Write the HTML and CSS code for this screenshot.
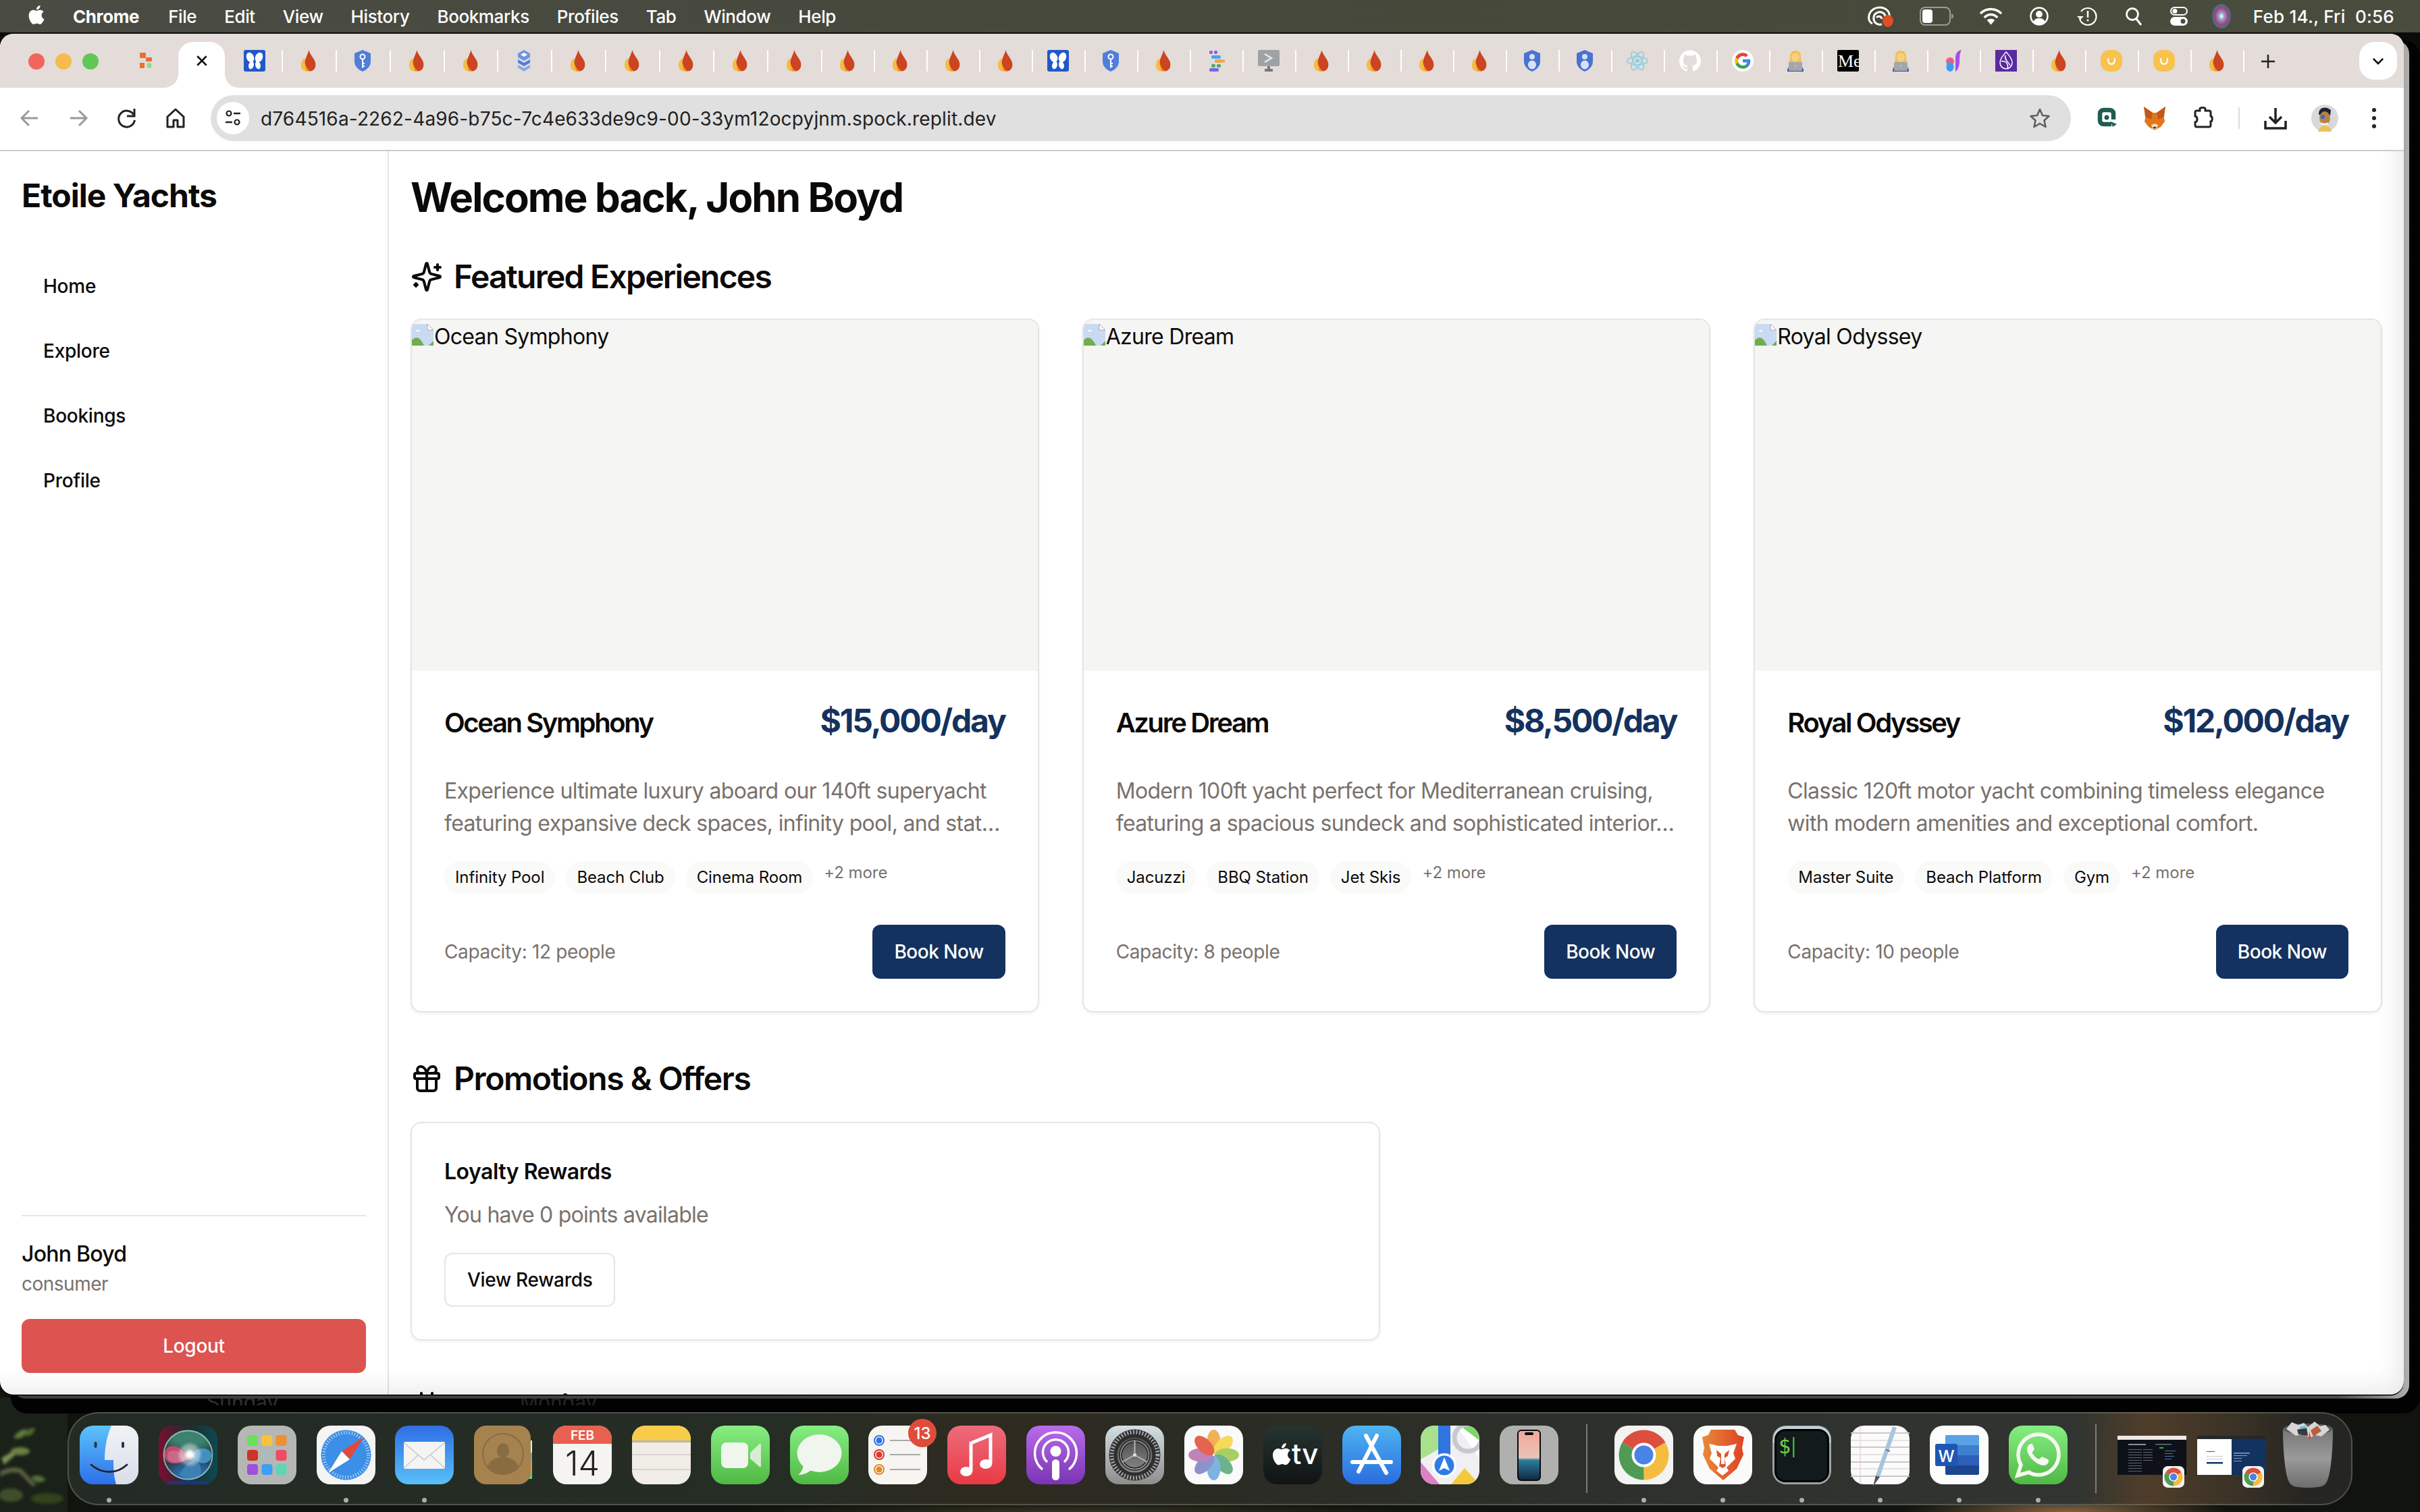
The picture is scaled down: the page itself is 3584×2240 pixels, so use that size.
FILE: index.html
```html
<!DOCTYPE html>
<html lang="en">
<head>
<meta charset="utf-8">
<title>Etoile Yachts</title>
<link rel="stylesheet" href="styles.css">
</head>
<body>
<svg class="defs" width="0" height="0" aria-hidden="true">
  <defs>
    <filter id="blur2"><feGaussianBlur stdDeviation="2"/></filter>
    <filter id="blur8"><feGaussianBlur stdDeviation="7"/></filter>
    <linearGradient id="gFinder" x1="0" y1="0" x2="0" y2="1"><stop offset="0" stop-color="#5bc3fa"/><stop offset="1" stop-color="#2d6fea"/></linearGradient>
    <linearGradient id="gFinderR" x1="0" y1="0" x2="0" y2="1"><stop offset="0" stop-color="#f1f2f5"/><stop offset="1" stop-color="#d8deea"/></linearGradient>
    <linearGradient id="gSiri" x1="0" y1="0" x2="1" y2="0"><stop offset="0" stop-color="#7a0f30"/><stop offset=".5" stop-color="#1f2a33"/><stop offset="1" stop-color="#0c4a4e"/></linearGradient>
    <linearGradient id="gMail" x1="0" y1="0" x2="0" y2="1"><stop offset="0" stop-color="#2f6ee6"/><stop offset="1" stop-color="#58c0f7"/></linearGradient>
    <linearGradient id="gFace" x1="0" y1="0" x2="0" y2="1"><stop offset="0" stop-color="#86ee82"/><stop offset="1" stop-color="#4fb944"/></linearGradient>
    <linearGradient id="gMusic" x1="0" y1="0" x2="0" y2="1"><stop offset="0" stop-color="#ee6c7c"/><stop offset="1" stop-color="#e93a44"/></linearGradient>
    <linearGradient id="gPod" x1="0" y1="0" x2="0" y2="1"><stop offset="0" stop-color="#b96bea"/><stop offset="1" stop-color="#7a34b4"/></linearGradient>
    <linearGradient id="gSet" x1="0" y1="0" x2="0" y2="1"><stop offset="0" stop-color="#d3dfe4"/><stop offset="1" stop-color="#8d8e8c"/></linearGradient>
    <linearGradient id="gGear" x1="0" y1="0" x2="0" y2="1"><stop offset="0" stop-color="#4a4a4c"/><stop offset="1" stop-color="#8b8b8c"/></linearGradient>
    <linearGradient id="gTv" x1="0" y1="0" x2="0" y2="1"><stop offset="0" stop-color="#263430"/><stop offset="1" stop-color="#101414"/></linearGradient>
    <linearGradient id="gApp" x1="0" y1="0" x2="0" y2="1"><stop offset="0" stop-color="#4fb4f0"/><stop offset="1" stop-color="#2a6cdf"/></linearGradient>
    <linearGradient id="gPhone" x1="0" y1="0" x2="0" y2="1"><stop offset="0" stop-color="#f3a79a"/><stop offset=".55" stop-color="#e8c3b8"/><stop offset=".6" stop-color="#2d7d9e"/><stop offset="1" stop-color="#0e2a44"/></linearGradient>
    <linearGradient id="gBrave" x1="0" y1="0" x2="1" y2="0"><stop offset="0" stop-color="#e98a3a"/><stop offset="1" stop-color="#dd4326"/></linearGradient>
    <linearGradient id="gTrash" x1="0" y1="0" x2="0" y2="1"><stop offset="0" stop-color="#777"/><stop offset=".5" stop-color="#9a9a9a"/><stop offset="1" stop-color="#6d6d6d"/></linearGradient>
    <symbol id="flame" viewBox="0 0 32 32">
      <path fill="#cc4420" d="M16.500 0C17.500 6 23 11 25.500 17 28 24 25 31 18.500 31.500 13 31.500 10 27 10 21 10 13 15 7 16.500 0Z"/>
      <path fill="#f5bd41" d="M10 12C6.500 15 4.500 19 5 24c.5 4.500 3.500 7.500 7.500 7.500 2.500 0 4.500-.2 6-.2C13.500 29 10 22 10 12Z"/>
      <path fill="#ee8b2c" d="M10 13C9.800 21 13.500 28.500 18.500 31.300c-2 .2-3.800.2-5 .2C11.500 26 9.500 19 10 13Z"/>
    </symbol>
    <symbol id="butterfly" viewBox="0 0 32 32">
      <rect width="32" height="32" rx="3" fill="#2058c9"/>
      <ellipse cx="9.500" cy="11" rx="5.500" ry="7.500" fill="#fff" transform="rotate(-22 9.500 11)"/>
      <ellipse cx="22.500" cy="11" rx="5.500" ry="7.500" fill="#fff" transform="rotate(22 22.500 11)"/>
      <ellipse cx="11" cy="22.500" rx="3.800" ry="6" fill="#fff" transform="rotate(14 11 22.500)"/>
      <ellipse cx="21" cy="22.500" rx="3.800" ry="6" fill="#fff" transform="rotate(-14 21 22.500)"/>
    </symbol>
    <symbol id="shieldkey" viewBox="0 0 32 32">
      <path fill="#4f7edb" d="M16 0l12 5v12c0 7-5 12-12 15C9 29 4 24 4 17V5Z"/>
      <circle cx="16" cy="10" r="3.500" fill="none" stroke="#fff" stroke-width="2"/>
      <path stroke="#fff" stroke-width="2" fill="none" d="M16 13.500v13M16 20h3M16 24h3"/>
    </symbol>
    <symbol id="shield" viewBox="0 0 32 32">
      <path fill="#4873d2" d="M16 0l12 5v12c0 7-5 12-12 15C9 29 4 24 4 17V5Z"/>
      <circle cx="16" cy="10" r="4" fill="#d9e2f5"/>
      <ellipse cx="16" cy="22" rx="6" ry="6.500" fill="#d9e2f5"/>
    </symbol>
    <symbol id="stack" viewBox="0 0 32 32">
      <path fill="#6d95e3" d="M16 0l9 5v6l-9 5-9-5V5Z"/>
      <path fill="#fff" d="M16 4l5 3-5 3-5-3Z"/>
      <path fill="#4f7edb" d="M7 14l9 5 9-5v5l-9 5-9-5Z"/>
      <path fill="#86a8ea" d="M7 22l9 5 9-5v4l-9 6-9-6Z"/>
    </symbol>
    <symbol id="dots" viewBox="0 0 32 32">
      <rect x="6" y="1" width="5" height="5" rx="2" fill="#7f63e2"/><rect x="13" y="1" width="5" height="5" rx="2" fill="#7f63e2"/>
      <rect x="9" y="8" width="14" height="5" rx="2" fill="#49a6e6"/>
      <rect x="14" y="14" width="12" height="5" rx="2" fill="#f1a452"/><rect x="26" y="14" width="3" height="5" rx="1.500" fill="#f1a452"/>
      <rect x="9" y="21" width="6" height="5" rx="2" fill="#3fb16f"/><rect x="17" y="21" width="6" height="5" rx="2" fill="#3fb16f"/>
      <rect x="6" y="27" width="14" height="5" rx="2" fill="#7f63e2"/>
    </symbol>
    <symbol id="term" viewBox="0 0 32 32">
      <rect width="32" height="24" rx="2" fill="#9ea2a6"/>
      <path d="M10 6l10 6-10 6" fill="none" stroke="#e8e8e8" stroke-width="2.500"/>
      <rect x="14" y="24" width="4" height="4" fill="#77797c"/><rect x="10" y="28" width="12" height="4" fill="#77797c"/>
    </symbol>
    <symbol id="react" viewBox="0 0 32 32">
      <g fill="none" stroke="#86cfe2" stroke-width="1.500"><ellipse cx="16" cy="16" rx="15" ry="6"/><ellipse cx="16" cy="16" rx="15" ry="6" transform="rotate(60 16 16)"/><ellipse cx="16" cy="16" rx="15" ry="6" transform="rotate(120 16 16)"/></g>
      <circle cx="16" cy="16" r="3" fill="#86cfe2"/>
    </symbol>
    <symbol id="github" viewBox="0 0 24 24">
      <path fill="#fff" d="M12 .297c-6.630 0-12 5.373-12 12 0 5.303 3.438 9.800 8.205 11.385.6.113.82-.258.82-.577 0-.285-.01-1.040-.015-2.040-3.338.724-4.042-1.610-4.042-1.610C4.422 18.070 3.633 17.700 3.633 17.700c-1.087-.744.084-.729.084-.729 1.205.084 1.838 1.236 1.838 1.236 1.070 1.835 2.809 1.305 3.495.998.108-.776.417-1.305.76-1.605-2.665-.3-5.466-1.332-5.466-5.930 0-1.310.465-2.380 1.235-3.220-.135-.303-.54-1.523.105-3.176 0 0 1.005-.322 3.300 1.230.96-.267 1.980-.399 3-.405 1.020.006 2.040.138 3 .405 2.280-1.552 3.285-1.230 3.285-1.230.645 1.653.24 2.873.12 3.176.765.84 1.230 1.910 1.230 3.220 0 4.610-2.805 5.625-5.475 5.920.42.36.81 1.096.81 2.220 0 1.606-.015 2.896-.015 3.286 0 .315.21.69.825.57C20.565 22.092 24 17.592 24 12.297c0-6.627-5.373-12-12-12"/>
    </symbol>
    <symbol id="google" viewBox="0 0 24 24">
      <circle cx="12" cy="12" r="12" fill="#fff"/>
      <g transform="translate(2.400 2.400) scale(.8)">
      <path fill="#4285f4" d="M22.560 12.250c0-.78-.07-1.530-.2-2.250H12v4.260h5.920c-.26 1.370-1.040 2.530-2.080 3.310v2.770h3.570c2.080-1.920 3.280-4.740 3.280-8.090z"/>
      <path fill="#34a853" d="M12 23c2.970 0 5.460-.98 7.280-2.660l-3.570-2.770c-.98.66-2.230 1.060-3.710 1.060-2.860 0-5.290-1.930-6.160-4.530H2.180v2.840C3.990 20.530 7.700 23 12 23z"/>
      <path fill="#fbbc05" d="M5.840 14.090c-.22-.66-.35-1.360-.35-2.090s.13-1.430.35-2.090V7.070H2.180C1.430 8.550 1 10.220 1 12s.43 3.450 1.180 4.930l2.850-2.220.81-.62z"/>
      <path fill="#ea4335" d="M12 5.380c1.620 0 3.060.56 4.210 1.640l3.150-3.150C17.450 2.090 14.970 1 12 1 7.700 1 3.990 3.470 2.180 7.070l3.660 2.840c.87-2.600 3.300-4.530 6.160-4.530z"/>
      </g>
    </symbol>
    <symbol id="woman" viewBox="0 0 32 32">
      <path fill="#f1c04f" d="M8 10C8 3 12 1 16 1s8 2 8 9c0 4 1 8 2 10H6c1-2 2-6 2-10Z"/>
      <ellipse cx="16" cy="11" rx="6" ry="6.500" fill="#f6cf84"/>
      <path fill="#2a52b8" d="M4 32c0-5 2-8 6-9h12c4 1 6 4 6 9Z"/>
      <rect x="6" y="18" width="20" height="13" rx="1" fill="#a4a6aa"/>
      <circle cx="16" cy="24" r="1" fill="#d8d8d8"/>
    </symbol>
    <symbol id="medium" viewBox="0 0 32 32">
      <rect width="32" height="32" rx="2" fill="#000"/>
      <text x="1" y="25" class="fav-me">Me</text>
    </symbol>
    <symbol id="jlogo" viewBox="0 0 32 32">
      <path fill="#a54ee8" d="M19 32c4-3 6-8 6-16 0-7 1-13 3-16-6 1-9 5-9 12Z"/>
      <circle cx="11" cy="17" r="6" fill="#ea5f7f"/>
      <ellipse cx="11" cy="25" rx="5.500" ry="7" fill="#3d9cf0"/>
    </symbol>
    <symbol id="sui" viewBox="0 0 32 32">
      <rect width="32" height="32" fill="#5a2aa0"/>
      <path d="M16 3c5 6 9 10 9 16a9 9 0 0 1-18 0c0-6 4-10 9-16Z" fill="none" stroke="#fff" stroke-width="1.500"/>
      <path d="M9 17c6-2 11 3 9 11M15 8c-2 6 4 9 7 15" fill="none" stroke="#fff" stroke-width="1.500"/>
    </symbol>
    <symbol id="ulogo" viewBox="0 0 32 32">
      <rect width="32" height="32" rx="13" fill="#f8c24e"/>
      <path d="M11 13c0 5 2 8 5 8s5-3 5-8" fill="none" stroke="#fff" stroke-width="2.200" stroke-linecap="round"/>
    </symbol>
    <symbol id="chrome" viewBox="0 0 87 87">
      <path fill="#dc4f3e" d="M43.500 43.500L11.500 25A37 37 0 0 1 75.500 25Z"/>
      <path fill="#f4bd3f" d="M43.500 43.500L75.500 25A37 37 0 0 1 43.500 80.500Z"/>
      <path fill="#4f9a55" d="M43.500 43.500L43.500 80.500A37 37 0 0 1 11.500 25Z"/>
      <circle cx="43.500" cy="43.500" r="18" fill="#fff"/>
      <circle cx="43.500" cy="43.500" r="14" fill="#4a82e6"/>
    </symbol>
  </defs>
</svg>

<div class="backdrop"></div>
<svg class="foliage" viewBox="0 0 100 170">
  <rect width="100" height="170" fill="#1a2118"/>
  <g filter="url(#blur2)">
    <path d="M2 90l24-14 -2 8-18 16Z" fill="#7f8f54"/>
    <path d="M20 60c6-10 14-14 20-12-2 10-10 16-20 12Z" fill="#5f7a3a"/>
    <path d="M36 56c4-8 10-12 16-10-2 8-8 14-16 10Z" fill="#4f6a30"/>
    <path d="M0 110c10-6 22-8 32-4l22 24-6 2-20-20c-10-2-18 0-28 6Z" fill="#5c5f40"/>
    <path d="M46 118c8-4 16-2 22 4-8 6-16 6-22-4Z" fill="#56703a"/>
    <ellipse cx="16" cy="145" rx="18" ry="10" fill="#3e5029"/>
    <ellipse cx="70" cy="150" rx="24" ry="8" fill="#33431f"/>
    <ellipse cx="30" cy="80" rx="14" ry="6" fill="#6c8042"/>
  </g>
</svg>
<div class="back-black"></div>
<div class="ghost-strip"><span class="ghost ghost-a">Sunday</span><span class="ghost ghost-b">Monday</span></div>
<div class="back-shell"></div>

<header class="menubar">
  <svg class="apple" viewBox="0 0 24 24"><path fill="#fff" d="M12.152 6.896c-.948 0-2.415-1.078-3.960-1.040-2.040.027-3.910 1.183-4.961 3.014-2.117 3.675-.546 9.103 1.519 12.090 1.013 1.454 2.208 3.090 3.792 3.039 1.520-.065 2.090-.987 3.935-.987 1.831 0 2.350.987 3.960.948 1.637-.026 2.676-1.480 3.676-2.948 1.156-1.688 1.636-3.325 1.662-3.415-.039-.013-3.182-1.221-3.220-4.857-.026-3.040 2.480-4.494 2.597-4.559-1.429-2.090-3.623-2.324-4.390-2.376-2-.156-3.675 1.090-4.610 1.090zM15.530 3.830c.843-1.012 1.400-2.427 1.245-3.830-1.207.052-2.662.805-3.532 1.818-.78.896-1.454 2.338-1.273 3.714 1.338.104 2.715-.688 3.559-1.701"/></svg>
  <nav class="menu">
    <span class="menu-app">Chrome</span><span>File</span><span>Edit</span><span>View</span><span>History</span><span>Bookmarks</span><span>Profiles</span><span>Tab</span><span>Window</span><span>Help</span>
  </nav>
  <div class="status">
    <svg class="st st-cc" viewBox="0 0 40 32"><g fill="none" stroke="#fff" stroke-width="3"><path d="M8 27C2 24 1 16 5 10c5-7 15-9 22-5 5 3 7 8 6 12"/><path d="M22 28C14 30 9 24 10 17c1-5 6-8 11-7 4 1 6 4 6 7"/><path d="M14 18c3-3 7-2 8 2"/></g><ellipse cx="31" cy="23" rx="8" ry="9" fill="#e04f22"/></svg>
    <svg class="st st-batt" viewBox="0 0 50 28"><rect x="1" y="1" width="44" height="26" rx="7" fill="none" stroke="#9b9b92" stroke-width="2"/><rect x="4" y="4" width="15" height="20" rx="4" fill="#fff"/><path d="M47 10c2 1 3 2 3 4s-1 3-3 4Z" fill="#9b9b92"/></svg>
    <svg class="st st-wifi" viewBox="0 0 36 28"><g fill="none" stroke="#fff" stroke-width="3.500"><path d="M2 10c9-9 23-9 32 0"/><path d="M8 16c6-6 14-6 20 0"/></g><path d="M12 20c4-3 8-3 12 0l-6 7Z" fill="#fff"/></svg>
    <svg class="st st-user" viewBox="0 0 28 28"><circle cx="14" cy="14" r="12.500" fill="none" stroke="#fff" stroke-width="2.500"/><circle cx="14" cy="11" r="5" fill="#fff"/><path d="M5 23c2-5 5-6 9-6s7 1 9 6c-5 4-13 4-18 0Z" fill="#fff"/></svg>
    <svg class="st st-tm" viewBox="0 0 32 28"><path d="M7 7a12.500 12.500 0 1 1-2 11" fill="none" stroke="#fff" stroke-width="2.200"/><path d="M1 14l5 5 5-5Z" fill="#fff"/><path d="M17 6v10" stroke="#fff" stroke-width="2.500"/><circle cx="17" cy="20" r="1.500" fill="#fff"/></svg>
    <svg class="st st-search" viewBox="0 0 26 28"><circle cx="11" cy="11" r="8.500" fill="none" stroke="#fff" stroke-width="2.800"/><path d="M17 18l7 9" stroke="#fff" stroke-width="3"/></svg>
    <svg class="st st-cc2" viewBox="0 0 26 28"><rect x="1" y="1" width="24" height="11" rx="5.500" fill="none" stroke="#fff" stroke-width="2"/><circle cx="7" cy="6.500" r="3.500" fill="#fff"/><rect y="15" width="26" height="13" rx="6.500" fill="#fff"/><circle cx="19" cy="21.500" r="3.500" fill="#48493f"/></svg>
    <svg class="st st-siri" viewBox="0 0 28 36"><defs><radialGradient id="gOrb"><stop offset="0" stop-color="#fff"/><stop offset=".3" stop-color="#8fa0c8"/><stop offset=".7" stop-color="#a83d7a"/><stop offset="1" stop-color="#2a8088"/></radialGradient></defs><ellipse cx="14" cy="18" rx="14" ry="18" fill="url(#gOrb)"/></svg>
    <span class="clock">Feb 14., Fri&nbsp;&nbsp;0:56</span>
  </div>
</header>

<main class="window">
  <div class="tabstrip">
    <div class="lights"><i class="light light-r"></i><i class="light light-y"></i><i class="light light-g"></i></div>
    <svg class="fav-replit" viewBox="0 0 20 24"><rect x="0" y="0" width="9" height="8" rx="1" fill="#ec6f2f"/><rect x="9" y="7" width="9" height="6" rx="1" fill="#ec6f2f"/><rect x="0" y="15" width="7" height="8" rx="1" fill="#ec6f2f"/><ellipse cx="14" cy="19" rx="3.500" ry="4" fill="#8fd88f"/></svg>
    <div class="tab-active"><svg class="tab-x" viewBox="0 0 16 16"><path d="M2 2l12 12M14 2L2 14" stroke="#111" stroke-width="2.200"/></svg></div>
    <div class="tabs">
      <div class="tab tab-wide"><svg class="fav"><use href="#butterfly"/></svg></div>
      <div class="tab tab-wide"><svg class="fav"><use href="#flame"/></svg></div>
      <div class="tab tab-wide"><svg class="fav"><use href="#shieldkey"/></svg></div>
      <div class="tab tab-wide"><svg class="fav"><use href="#flame"/></svg></div>
      <div class="tab tab-wide"><svg class="fav"><use href="#flame"/></svg></div>
      <div class="tab tab-wide"><svg class="fav"><use href="#stack"/></svg></div>
      <div class="tab tab-wide"><svg class="fav"><use href="#flame"/></svg></div>
      <div class="tab tab-wide"><svg class="fav"><use href="#flame"/></svg></div>
      <div class="tab tab-wide"><svg class="fav"><use href="#flame"/></svg></div>
      <div class="tab tab-wide"><svg class="fav"><use href="#flame"/></svg></div>
      <div class="tab tab-wide"><svg class="fav"><use href="#flame"/></svg></div>
      <div class="tab"><svg class="fav"><use href="#flame"/></svg></div>
      <div class="tab"><svg class="fav"><use href="#flame"/></svg></div>
      <div class="tab"><svg class="fav"><use href="#flame"/></svg></div>
      <div class="tab"><svg class="fav"><use href="#flame"/></svg></div>
      <div class="tab"><svg class="fav"><use href="#butterfly"/></svg></div>
      <div class="tab"><svg class="fav"><use href="#shieldkey"/></svg></div>
      <div class="tab"><svg class="fav"><use href="#flame"/></svg></div>
      <div class="tab"><svg class="fav"><use href="#dots"/></svg></div>
      <div class="tab"><svg class="fav"><use href="#term"/></svg></div>
      <div class="tab"><svg class="fav"><use href="#flame"/></svg></div>
      <div class="tab"><svg class="fav"><use href="#flame"/></svg></div>
      <div class="tab"><svg class="fav"><use href="#flame"/></svg></div>
      <div class="tab"><svg class="fav"><use href="#flame"/></svg></div>
      <div class="tab"><svg class="fav"><use href="#shield"/></svg></div>
      <div class="tab"><svg class="fav"><use href="#shield"/></svg></div>
      <div class="tab"><svg class="fav"><use href="#react"/></svg></div>
      <div class="tab"><svg class="fav"><use href="#github"/></svg></div>
      <div class="tab"><svg class="fav"><use href="#google"/></svg></div>
      <div class="tab"><svg class="fav"><use href="#woman"/></svg></div>
      <div class="tab"><svg class="fav"><use href="#medium"/></svg></div>
      <div class="tab"><svg class="fav"><use href="#woman"/></svg></div>
      <div class="tab"><svg class="fav"><use href="#jlogo"/></svg></div>
      <div class="tab"><svg class="fav"><use href="#sui"/></svg></div>
      <div class="tab"><svg class="fav"><use href="#flame"/></svg></div>
      <div class="tab"><svg class="fav"><use href="#ulogo"/></svg></div>
      <div class="tab"><svg class="fav"><use href="#ulogo"/></svg></div>
      <div class="tab"><svg class="fav"><use href="#flame"/></svg></div>
    </div>
    <svg class="tab-plus" viewBox="0 0 22 22"><path d="M11 1v20M1 11h20" stroke="#222" stroke-width="2.500"/></svg>
    <div class="tab-chevron"><svg viewBox="0 0 20 12"><path d="M2 2l8 8 8-8" fill="none" stroke="#111" stroke-width="3"/></svg></div>
  </div>

  <div class="toolbar">
    <svg class="tool" viewBox="0 0 36 36"><path d="M30 18H7M17 7L6 18l11 11" fill="none" stroke="#9a9a9a" stroke-width="3"/></svg>
    <svg class="tool" viewBox="0 0 36 36"><path d="M6 18h23M19 7l11 11-11 11" fill="none" stroke="#9a9a9a" stroke-width="3"/></svg>
    <svg class="tool" viewBox="0 0 36 36"><path d="M28 13a12 12 0 1 0 1.500 8" fill="none" stroke="#222" stroke-width="3"/><path d="M29 4v11H18" fill="none" stroke="#222" stroke-width="3"/></svg>
    <svg class="tool" viewBox="0 0 36 36"><path d="M6 16L18 5l12 11v15H21V21h-6v10H6Z" fill="none" stroke="#222" stroke-width="3" stroke-linejoin="round"/></svg>
    <div class="omnibox">
      <span class="chip"><svg viewBox="0 0 28 28"><circle cx="8" cy="7" r="3.500" fill="none" stroke="#222" stroke-width="2.200"/><path d="M15 7h10M3 20h10" stroke="#222" stroke-width="2.500"/><circle cx="20" cy="20" r="3.500" fill="none" stroke="#222" stroke-width="2.200"/></svg></span>
      <span class="url">d764516a-2262-4a96-b75c-7c4e633de9c9-00-33ym12ocpyjnm.spock.replit.dev</span>
      <svg class="star" viewBox="0 0 32 32"><path d="M16 3l4 9 9.500 1-7 6.500 2 9.500-8.500-5-8.500 5 2-9.500-7-6.500 9.500-1Z" fill="none" stroke="#5f5f5f" stroke-width="2.600" stroke-linejoin="round"/></svg>
    </div>
    <div class="tools">
      <svg class="tool" viewBox="0 0 36 36"><path d="M25 27H14c-4 0-6-2-6-5V11c0-3 2-5 6-5h8c4 0 6 2 6 5v9" fill="none" stroke="#1f5d50" stroke-width="6.500" stroke-linejoin="round"/><circle cx="18" cy="17" r="3.500" fill="#1f5d50"/><path d="M24 23l9 4-6 4Z" fill="#1f5d50"/></svg>
      <svg class="tool" viewBox="0 0 36 36"><path fill="#e2761b" d="M2 1l13 9h6l13-9-3 13 2 9-6 8-7 4h-4l-7-4-6-8 2-9Z"/><path fill="#c0591a" d="M2 1l13 9-2 10-9-4ZM34 1L21 10l2 10 9-4Z"/><path fill="#f6d9b9" d="M13 28l5-2 5 2-2 6h-6Z"/><path fill="#2c2c2c" d="M15 31h6l-3 3Z"/></svg>
      <svg class="tool" viewBox="0 0 36 36"><path d="M14 7V4c0-2 8-2 8 0v3h6c1 0 2 1 2 2v6c3 0 3 8 0 8v6c0 1-1 2-2 2H9c-1 0-2-1-2-2v-5c4-1 4-8 0-9V9c0-1 1-2 2-2Z" fill="none" stroke="#222" stroke-width="3"/></svg>
      <span class="tool-div"></span>
      <svg class="tool" viewBox="0 0 36 36"><path d="M18 3v22M9 16l9 9 9-9" fill="none" stroke="#222" stroke-width="3.500"/><path d="M3 22v11h30V22" fill="none" stroke="#222" stroke-width="3.500"/></svg>
      <svg class="avatar" viewBox="0 0 40 40"><circle cx="20" cy="20" r="20" fill="#d9d9d9"/><path d="M11 14c0-8 6-11 13-9l5 3-1 8H13Z" fill="#1c2230"/><ellipse cx="20" cy="20" rx="8" ry="10" fill="#b88146"/><circle cx="17" cy="18" r="3" fill="#2e6cd0"/><path d="M14 26c3 2 8 2 11 0l-1 4h-9Z" fill="#f5f5f5"/><path d="M10 40c1-6 5-9 10-9s9 3 10 9Z" fill="#e9c25e"/></svg>
      <svg class="tool" viewBox="0 0 36 36"><circle cx="18" cy="6" r="3" fill="#222"/><circle cx="18" cy="18" r="3" fill="#222"/><circle cx="18" cy="30" r="3" fill="#222"/></svg>
    </div>
  </div>

  <div class="app">
    <aside class="sidebar">
      <h2 class="brand">Etoile Yachts</h2>
      <nav class="nav">
        <a class="nav-item">Home</a>
        <a class="nav-item">Explore</a>
        <a class="nav-item">Bookings</a>
        <a class="nav-item">Profile</a>
      </nav>
      <div class="side-foot">
        <div class="user-name">John Boyd</div>
        <div class="user-role">consumer</div>
        <button class="btn-logout">Logout</button>
      </div>
    </aside>

    <section class="main">
      <h1 class="welcome">Welcome back, John Boyd</h1>

      <h2 class="sec-title sec-first">
        <svg class="sec-icon" viewBox="0 0 24 24"><path d="M9.937 15.500A2 2 0 0 0 8.500 14.063l-6.135-1.582a.5.5 0 0 1 0-.962L8.500 9.936A2 2 0 0 0 9.937 8.500l1.582-6.135a.5.5 0 0 1 .963 0L14.063 8.500A2 2 0 0 0 15.500 9.937l6.135 1.581a.5.5 0 0 1 0 .964L15.500 14.063a2 2 0 0 0-1.437 1.437l-1.582 6.135a.5.5 0 0 1-.963 0z"/><path d="M20 3v4M22 5h-4M4 17v2M5 18H3"/></svg>
        Featured Experiences
      </h2>
      <div class="cards">
        <article class="card">
          <div class="card-img"><svg class="broken" viewBox="0 0 32 32"><path d="M0 0h23l9 9v23H0Z" fill="#c9daf5"/><path d="M23 0l9 9h-9Z" fill="#fff" stroke="#aaa"/><path d="M0 32V24c5-6 12-6 18 8Z" fill="#6fae4e"/><path d="M25 32l7-7v7Z" fill="#6fae4e"/><path d="M6 11c0-3 5-3 6 0Z" fill="#fff"/></svg>Ocean Symphony</div>
          <div class="card-body">
            <div class="card-head"><h3 class="card-title">Ocean Symphony</h3><span class="price">$15,000/day</span></div>
            <p class="desc">Experience ultimate luxury aboard our 140ft superyacht featuring expansive deck spaces, infinity pool, and stat…</p>
            <div class="tags"><span class="tag">Infinity Pool</span><span class="tag">Beach Club</span><span class="tag">Cinema Room</span><span class="more">+2 more</span></div>
            <div class="card-foot"><span class="cap">Capacity: 12 people</span><button class="btn-book">Book Now</button></div>
          </div>
        </article>
        <article class="card">
          <div class="card-img"><svg class="broken" viewBox="0 0 32 32"><path d="M0 0h23l9 9v23H0Z" fill="#c9daf5"/><path d="M23 0l9 9h-9Z" fill="#fff" stroke="#aaa"/><path d="M0 32V24c5-6 12-6 18 8Z" fill="#6fae4e"/><path d="M25 32l7-7v7Z" fill="#6fae4e"/><path d="M6 11c0-3 5-3 6 0Z" fill="#fff"/></svg>Azure Dream</div>
          <div class="card-body">
            <div class="card-head"><h3 class="card-title">Azure Dream</h3><span class="price">$8,500/day</span></div>
            <p class="desc">Modern 100ft yacht perfect for Mediterranean cruising, featuring a spacious sundeck and sophisticated interior…</p>
            <div class="tags"><span class="tag">Jacuzzi</span><span class="tag">BBQ Station</span><span class="tag">Jet Skis</span><span class="more">+2 more</span></div>
            <div class="card-foot"><span class="cap">Capacity: 8 people</span><button class="btn-book">Book Now</button></div>
          </div>
        </article>
        <article class="card">
          <div class="card-img"><svg class="broken" viewBox="0 0 32 32"><path d="M0 0h23l9 9v23H0Z" fill="#c9daf5"/><path d="M23 0l9 9h-9Z" fill="#fff" stroke="#aaa"/><path d="M0 32V24c5-6 12-6 18 8Z" fill="#6fae4e"/><path d="M25 32l7-7v7Z" fill="#6fae4e"/><path d="M6 11c0-3 5-3 6 0Z" fill="#fff"/></svg>Royal Odyssey</div>
          <div class="card-body">
            <div class="card-head"><h3 class="card-title">Royal Odyssey</h3><span class="price">$12,000/day</span></div>
            <p class="desc">Classic 120ft motor yacht combining timeless elegance with modern amenities and exceptional comfort.</p>
            <div class="tags"><span class="tag">Master Suite</span><span class="tag">Beach Platform</span><span class="tag">Gym</span><span class="more">+2 more</span></div>
            <div class="card-foot"><span class="cap">Capacity: 10 people</span><button class="btn-book">Book Now</button></div>
          </div>
        </article>
      </div>

      <h2 class="sec-title sec-next">
        <svg class="sec-icon" viewBox="0 0 24 24"><rect x="3" y="8" width="18" height="4" rx="1"/><path d="M12 8v13M19 12v7a2 2 0 0 1-2 2H7a2 2 0 0 1-2-2v-7M7.500 8a2.500 2.500 0 0 1 0-5A4.800 8 0 0 1 12 8a4.800 8 0 0 1 4.500-5 2.500 2.500 0 0 1 0 5"/></svg>
        Promotions &amp; Offers
      </h2>
      <div class="promo-grid">
        <article class="promo">
          <h3 class="promo-title">Loyalty Rewards</h3>
          <p class="promo-text">You have 0 points available</p>
          <button class="btn-outline">View Rewards</button>
        </article>
      </div>

      <h2 class="sec-title sec-next">
        <svg class="sec-icon" viewBox="0 0 24 24"><path d="M8 2v4M16 2v4M3 10h18"/><rect x="3" y="4" width="18" height="18" rx="2"/></svg>
        Upcoming Tours
      </h2>
    </section>
    <div class="edge-fade"></div>
  </div>
</main>

<footer class="dock">
  <div class="dock-item is-open"><svg class="di" viewBox="0 0 87 87"><rect width="87" height="87" rx="20" fill="url(#gFinder)"/><path d="M47 0h20a20 20 0 0 1 20 20v47a20 20 0 0 1-20 20H54c-2-8-4-15-4-36H37C37 30 41 14 47 0Z" fill="url(#gFinderR)"/><rect x="21.500" y="24" width="4" height="9" rx="2" fill="#26344a"/><rect x="62" y="24" width="4" height="9" rx="2" fill="#26344a"/><path d="M17 58c16 14 38 14 53 0" fill="none" stroke="#26262c" stroke-width="2.800" stroke-linecap="round"/></svg></div>
  <div class="dock-item"><svg class="di" viewBox="0 0 87 87"><clipPath id="cSiri"><circle cx="43.500" cy="43.500" r="37"/></clipPath><rect width="87" height="87" rx="20" fill="url(#gSiri)"/><path d="M8 87c10-8 60-8 71 0Z" fill="#1b3e92" opacity=".8" filter="url(#blur2)"/><g clip-path="url(#cSiri)"><circle cx="43.500" cy="43.500" r="37" fill="#2b3f4a"/><ellipse cx="46" cy="18" rx="36" ry="20" fill="#3f8f74" opacity=".85" filter="url(#blur8)"/><ellipse cx="50" cy="72" rx="34" ry="18" fill="#2a72b8" opacity=".85" filter="url(#blur8)"/><path d="M8 40c6-14 20-12 30 0 3 4 6 6 8 6-8 10-26 14-34 6-3-3-5-8-4-12Z" fill="#e0486e" opacity=".85"/><path d="M16 38c10-4 22 4 24 12-8 6-22 6-26 0-2-4-1-9 2-12Z" fill="#c58aa5" opacity=".55"/><path d="M48 44c6-10 20-14 28-6 4 5 3 11-2 15-8 6-20 2-26-9Z" fill="#4aa2dc" opacity=".8"/><path d="M30 72c8-12 18-20 24-26 8 12 10 18 8 26-6 8-26 8-32 0Z" fill="#4a8fc0" opacity=".6"/></g><circle cx="43.500" cy="43.500" r="36" fill="none" stroke="#a7dccb" stroke-width="2" opacity=".7"/><circle cx="46" cy="43" r="16" fill="#fff" opacity=".45" filter="url(#blur2)"/><circle cx="46" cy="43" r="7" fill="#fff" filter="url(#blur2)"/></svg></div>
  <div class="dock-item"><svg class="di" viewBox="0 0 87 87"><rect width="87" height="87" rx="20" fill="#b5b7b5"/><rect x="14" y="14" width="16" height="16" rx="4" fill="#6adf5a"/><rect x="35.500" y="14" width="16" height="16" rx="4" fill="#f7c339"/><rect x="56.500" y="14" width="16" height="16" rx="4" fill="#ee8f30"/><rect x="14" y="36" width="16" height="16" rx="4" fill="#cf3327"/><rect x="35.500" y="36" width="16" height="16" rx="4" fill="#b0babd"/><rect x="56.500" y="36" width="16" height="16" rx="4" fill="#ee4c62"/><rect x="14" y="57" width="16" height="16" rx="4" fill="#9e50dc"/><rect x="35.500" y="57" width="16" height="16" rx="4" fill="#3c9ef5"/><rect x="56.500" y="57" width="16" height="16" rx="4" fill="#5fd5b0"/></svg></div>
  <div class="dock-item is-open"><svg class="di" viewBox="0 0 87 87"><rect width="87" height="87" rx="20" fill="#f4f4f4"/><circle cx="43.500" cy="43.500" r="37" fill="#3c8fe6"/><circle cx="43.500" cy="43.500" r="33" fill="none" stroke="#cfe3f8" stroke-width="5" stroke-dasharray="1 3"/><path d="M70 17L37 38l12 12Z" fill="#e2493a"/><path d="M17 70l20-32 12 12Z" fill="#fff"/></svg></div>
  <div class="dock-item is-open"><svg class="di" viewBox="0 0 87 87"><rect width="87" height="87" rx="20" fill="url(#gMail)"/><rect x="13" y="24" width="61" height="40" rx="2" fill="#f4f4f2"/><path d="M13 25l30 26 31-26M13 63l22-20M74 63L52 43" fill="none" stroke="#c5c8cc" stroke-width="1.500"/></svg></div>
  <div class="dock-item"><svg class="di" viewBox="0 0 87 87"><rect x="76" y="22" width="10" height="18" fill="#e9e9e9"/><rect x="76" y="40" width="10" height="14" fill="#62a9e5"/><rect x="76" y="54" width="10" height="13" fill="#ee9a35"/><rect x="76" y="67" width="10" height="12" fill="#6ecc63"/><rect width="84" height="87" rx="18" fill="#a5824e"/><circle cx="43" cy="42" r="30" fill="none" stroke="#8a6c42" stroke-width="2"/><ellipse cx="43" cy="37" rx="9" ry="11" fill="#8a6c42"/><path d="M20 62c3-12 13-15 23-15s20 3 23 15c-11 13-35 13-46 0Z" fill="#8a6c42"/></svg></div>
  <div class="dock-item"><svg class="di" viewBox="0 0 87 87"><rect width="87" height="87" rx="20" fill="#f5f4f2"/><path d="M0 27V20A20 20 0 0 1 20 0h47a20 20 0 0 1 20 20v7Z" fill="#e8604f"/><text x="43.500" y="21" class="cal-mon">FEB</text><text x="43.500" y="74" class="cal-day">14</text></svg></div>
  <div class="dock-item"><svg class="di" viewBox="0 0 87 87"><rect width="87" height="87" rx="20" fill="#f0ede7"/><path d="M0 22V20A20 20 0 0 1 20 0h47a20 20 0 0 1 20 20v2Z" fill="#f8cc48"/><rect y="22" width="87" height="3" fill="#b9b6ad"/><path d="M0 43h87M0 65h87" stroke="#d9d6cf" stroke-width="2"/></svg></div>
  <div class="dock-item"><svg class="di" viewBox="0 0 87 87"><rect width="87" height="87" rx="20" fill="url(#gFace)"/><rect x="15" y="25" width="40" height="38" rx="8" fill="#f0f6ee"/><path d="M58 40l14-13c1-1 2 0 2 1v32c0 1-1 2-2 1L58 49Z" fill="#d8ecd4"/></svg></div>
  <div class="dock-item"><svg class="di" viewBox="0 0 87 87"><rect width="87" height="87" rx="20" fill="url(#gFace)"/><ellipse cx="43.500" cy="41" rx="33" ry="28" fill="#f0f6ee"/><path d="M20 58c-1 7-4 12-8 15 8 0 15-3 20-8Z" fill="#f0f6ee"/></svg></div>
  <div class="dock-item"><svg class="di" viewBox="0 0 87 87"><rect width="87" height="87" rx="20" fill="#f6f5f2"/><circle cx="16" cy="22" r="7" fill="none" stroke="#2f74e0" stroke-width="2"/><circle cx="16" cy="22" r="4.500" fill="#2f74e0"/><circle cx="16" cy="43" r="7" fill="none" stroke="#d83a2e" stroke-width="2"/><circle cx="16" cy="43" r="4.500" fill="#d83a2e"/><circle cx="16" cy="65" r="7" fill="none" stroke="#e08a2a" stroke-width="2"/><circle cx="16" cy="65" r="4.500" fill="#e08a2a"/><path d="M32 22h45M32 43h45M32 65h45" stroke="#a9a9a9" stroke-width="2"/><circle cx="80" cy="11" r="21" fill="#e04c3a"/><text x="80" y="20" class="badge">13</text></svg></div>
  <div class="dock-item"><svg class="di" viewBox="0 0 87 87"><rect width="87" height="87" rx="20" fill="url(#gMusic)"/><path d="M35 26l29-12v42" fill="none" stroke="#fff" stroke-width="5"/><path d="M35 24v44" stroke="#fff" stroke-width="5"/><ellipse cx="28" cy="68" rx="9" ry="7" fill="#fff"/><ellipse cx="57" cy="57" rx="9" ry="7" fill="#fff"/></svg></div>
  <div class="dock-item"><svg class="di" viewBox="0 0 87 87"><rect width="87" height="87" rx="20" fill="url(#gPod)"/><g fill="none" stroke="#fff" stroke-width="3.500"><path d="M24 65a31 31 0 1 1 39 0"/><path d="M31 54a19 19 0 1 1 25 0"/></g><circle cx="43.500" cy="38" r="8" fill="#fff"/><rect x="38" y="50" width="11" height="31" rx="5.500" fill="#fff"/></svg></div>
  <div class="dock-item"><svg class="di" viewBox="0 0 87 87"><rect width="87" height="87" rx="20" fill="url(#gSet)"/><circle cx="43.500" cy="43.500" r="38" fill="#2f2f30"/><circle cx="43.500" cy="43.500" r="34" fill="none" stroke="#a8a8a8" stroke-width="6" stroke-dasharray="2 2.500"/><circle cx="43.500" cy="43.500" r="27" fill="url(#gGear)" stroke="#2c2c2c" stroke-width="2"/><circle cx="43.500" cy="43.500" r="21" fill="none" stroke="#2c2c2c" stroke-width="5"/><circle cx="43.500" cy="43.500" r="21" fill="none" stroke="#9a9a9a" stroke-width="1.500"/><path d="M43.500 43.500V22M43.500 43.500L25 54M43.500 43.500L62 54" stroke="#b5b5b5" stroke-width="2"/><circle cx="43.500" cy="43.500" r="2.500" fill="#ddd"/></svg></div>
  <div class="dock-item"><svg class="di" viewBox="0 0 87 87"><rect width="87" height="87" rx="20" fill="#fafafa"/><g opacity=".85"><ellipse cx="43.500" cy="24" rx="10" ry="18" fill="#f2a23a"/><ellipse cx="43.500" cy="24" rx="10" ry="18" fill="#f5d43e" transform="rotate(45 43.500 43.500)"/><ellipse cx="43.500" cy="24" rx="10" ry="18" fill="#9cc84a" transform="rotate(90 43.500 43.500)"/><ellipse cx="43.500" cy="24" rx="10" ry="18" fill="#55a67a" transform="rotate(135 43.500 43.500)"/><ellipse cx="43.500" cy="24" rx="10" ry="18" fill="#69a7dd" transform="rotate(180 43.500 43.500)"/><ellipse cx="43.500" cy="24" rx="10" ry="18" fill="#7c80c4" transform="rotate(225 43.500 43.500)"/><ellipse cx="43.500" cy="24" rx="10" ry="18" fill="#b56fb0" transform="rotate(270 43.500 43.500)"/><ellipse cx="43.500" cy="24" rx="10" ry="18" fill="#e24a32" transform="rotate(315 43.500 43.500)"/></g></svg></div>
  <div class="dock-item"><svg class="di" viewBox="0 0 87 87"><rect width="87" height="87" rx="20" fill="url(#gTv)"/><g transform="translate(11 26) scale(1.350)"><path fill="#fff" d="M12.152 6.896c-.948 0-2.415-1.078-3.960-1.040-2.040.027-3.910 1.183-4.961 3.014-2.117 3.675-.546 9.103 1.519 12.090 1.013 1.454 2.208 3.090 3.792 3.039 1.520-.065 2.090-.987 3.935-.987 1.831 0 2.350.987 3.960.948 1.637-.026 2.676-1.480 3.676-2.948 1.156-1.688 1.636-3.325 1.662-3.415-.039-.013-3.182-1.221-3.220-4.857-.026-3.040 2.480-4.494 2.597-4.559-1.429-2.090-3.623-2.324-4.390-2.376-2-.156-3.675 1.090-4.610 1.090zM15.530 3.830c.843-1.012 1.400-2.427 1.245-3.830-1.207.052-2.662.805-3.532 1.818-.78.896-1.454 2.338-1.273 3.714 1.338.104 2.715-.688 3.559-1.701"/></g><text x="42" y="57" class="tv">tv</text></svg></div>
  <div class="dock-item"><svg class="di" viewBox="0 0 87 87"><rect width="87" height="87" rx="20" fill="url(#gApp)"/><g stroke="#fff" stroke-width="6" stroke-linecap="round"><path d="M35 15l30 55M51 15L24 68M15 54h57"/></g></svg></div>
  <div class="dock-item"><svg class="di" viewBox="0 0 87 87"><clipPath id="cMaps"><rect width="87" height="87" rx="20"/></clipPath><g clip-path="url(#cMaps)"><rect width="87" height="87" fill="#f0eff2"/><path d="M0 0h28v34L0 50Z" fill="#a8e08c"/><path d="M52 0h35v50Z" fill="#7fd56a"/><path d="M87 22L58 0h-6l35 50Z" fill="#fff"/><path d="M0 54l28 33H0Z" fill="#dc82c4"/><path d="M45 87l20-24 22 24Z" fill="#f3c93c"/><rect x="26" y="0" width="18" height="54" fill="#2f74e0"/><circle cx="70" cy="18" r="20" fill="none" stroke="#c8c8d0" stroke-width="7"/><circle cx="35" cy="59" r="18" fill="#fff"/><circle cx="35" cy="59" r="14.500" fill="#2f7be6"/><path d="M35 47l8 20-8-4-8 4Z" fill="#fff"/></g></svg></div>
  <div class="dock-item"><svg class="di" viewBox="0 0 87 87"><rect width="87" height="87" rx="20" fill="#b0b1af"/><rect x="26" y="6" width="35" height="76" rx="6" fill="#0b0b0c"/><rect x="28" y="8" width="31" height="72" rx="4" fill="url(#gPhone)"/><rect x="37" y="10" width="13" height="4" rx="2" fill="#000"/></svg></div>
  <span class="dock-sep dock-sep-a"></span>
  <div class="dock-item is-open"><svg class="di" viewBox="0 0 87 87"><rect width="87" height="87" rx="20" fill="#f3f3f1"/><use href="#chrome" width="87" height="87"/></svg></div>
  <div class="dock-item is-open"><svg class="di" viewBox="0 0 87 87"><rect width="87" height="87" rx="20" fill="#fafafa"/><path d="M26 6h35l5 8 9 3-3 16 2 10-10 21-20 17-20-17L14 43l2-10-3-16 9-3Z" fill="url(#gBrave)"/><path d="M23 27l14 3h13l14-3-5 14 3 8-10 10-3 3 3 5-9 7-9-7 3-5-3-3-10-10 3-8Z" fill="#fff"/><path d="M34 36l7 6v15h5V42l7-6-2 9-5 3 2 12-5 3-5-3 2-12-5-3Z" fill="#e0552c"/></svg></div>
  <div class="dock-item is-open"><svg class="di" viewBox="0 0 87 87"><rect width="87" height="87" rx="20" fill="#9aa3a6"/><path d="M1 20A19 19 0 0 1 20 1h47a19 19 0 0 1 19 19v6H1Z" fill="#bcd2dc"/><rect x="3" y="5" width="81" height="79" rx="16" fill="#000"/><rect x="6" y="8" width="75" height="73" rx="13" fill="#131a1c"/><text x="9" y="41" class="term-t">$</text><rect x="30" y="17" width="2.500" height="30" fill="#3fae3f"/></svg></div>
  <div class="dock-item is-open"><svg class="di" viewBox="0 0 87 87"><rect width="87" height="87" rx="20" fill="#fbfbfb"/><path d="M14 0v87" stroke="#f2c2c6" stroke-width="1"/><path d="M0 11h87M0 32h87M0 54h87M0 75h87" stroke="#c9c9c9" stroke-width="2"/><path d="M0 22h87M0 43h87M0 64h87" stroke="#dcdcdc" stroke-width="1.500"/><path d="M33 90l4-16 25-73 6 2-25 73Z" fill="#a9c4dd"/><path d="M33 90l4-16 6 2Z" fill="#555"/><path d="M52 36l6 2" stroke="#777" stroke-width="2"/></svg></div>
  <div class="dock-item is-open"><svg class="di" viewBox="0 0 87 87"><rect width="87" height="87" rx="20" fill="#fcfcfc"/><rect x="23" y="14" width="50" height="59" rx="3" fill="#2c5fb8"/><path d="M23 17a3 3 0 0 1 3-3h44a3 3 0 0 1 3 3v12H23Z" fill="#5aa2e6"/><rect x="23" y="29" width="50" height="15" fill="#3f7fd0"/><path d="M23 59h50v11a3 3 0 0 1-3 3H26a3 3 0 0 1-3-3Z" fill="#1d4590"/><rect x="8" y="27" width="33" height="33" rx="3" fill="#1f55b4"/><text x="24.500" y="54" class="word">W</text></svg></div>
  <div class="dock-item is-open"><svg class="di" viewBox="0 0 87 87"><rect width="87" height="87" rx="20" fill="url(#gFace)"/><path d="M44 13a30 30 0 0 1 0 60c-5 0-10-1-14-4l-17 5 5-16c-3-5-4-10-4-15a30 30 0 0 1 30-30Z" fill="none" stroke="#f4f8f1" stroke-width="5.500"/><path d="M33 27c-3 0-6 4-6 8 0 6 5 13 11 18 5 4 10 6 14 6 3 0 7-3 7-6 0-2 0-2-1-3l-9-4-3 3c-1 1-2 1-3 0-4-2-6-5-8-8-1-1 0-2 1-3l2-3-3-8Z" fill="#f4f8f1"/></svg></div>
  <span class="dock-sep dock-sep-b"></span>
  <div class="thumb">
    <svg class="thumb-img" viewBox="0 0 102 58"><rect width="102" height="58" fill="#0e1218"/><rect width="102" height="4" fill="#f1e8e5"/><rect y="4" width="102" height="2" fill="#e8e8e8"/><rect x="16" y="12" width="26" height="2" fill="#8a8f98"/><rect x="56" y="12" width="24" height="1.500" fill="#69717c"/><rect x="62" y="17" width="6" height="2" fill="#3fae4f"/><g fill="#5f6670"><rect x="16" y="20" width="20" height="1"/><rect x="38" y="20" width="14" height="1"/><rect x="16" y="24" width="20" height="1"/><rect x="38" y="24" width="14" height="1"/><rect x="16" y="28" width="20" height="1"/><rect x="38" y="28" width="14" height="1"/><rect x="16" y="32" width="20" height="1"/><rect x="38" y="32" width="14" height="1"/><rect x="16" y="36" width="20" height="1"/><rect x="38" y="36" width="14" height="1"/><rect x="16" y="40" width="20" height="1"/><rect x="16" y="44" width="20" height="1"/><rect x="16" y="48" width="20" height="1"/><rect x="16" y="52" width="20" height="1"/></g><g fill="#4a6fa8"><rect x="70" y="22" width="16" height="1"/><rect x="70" y="26" width="12" height="1"/><rect x="70" y="30" width="14" height="1"/><rect x="70" y="34" width="10" height="1"/></g></svg>
    <svg class="thumb-badge" viewBox="0 0 87 87"><rect width="87" height="87" rx="20" fill="#f3f3f1"/><use href="#chrome" width="87" height="87"/></svg>
  </div>
  <div class="thumb thumb-two">
    <svg class="thumb-img" viewBox="0 0 102 58"><rect width="102" height="58" fill="#fff"/><rect x="51" y="0" width="51" height="58" fill="#123260"/><rect width="102" height="5" fill="#24282c"/><rect x="14" y="23" width="12" height="1" fill="#555"/><rect x="14" y="30" width="24" height="1" fill="#ccc"/><rect x="14" y="34" width="24" height="1" fill="#ccc"/><rect x="14" y="39" width="24" height="2.500" fill="#123260"/><g fill="#8ea2c2"><rect x="54" y="25" width="24" height="1.500"/><rect x="54" y="29" width="20" height="1"/><rect x="54" y="33" width="12" height="1"/><rect x="54" y="37" width="12" height="1"/></g></svg>
    <svg class="thumb-badge" viewBox="0 0 87 87"><rect width="87" height="87" rx="20" fill="#f3f3f1"/><use href="#chrome" width="87" height="87"/></svg>
  </div>
  <div class="trash"><svg viewBox="0 0 76 100"><path d="M1 12c0 30 3 70 10 80 3 5 10 7 27 7s24-2 27-7c7-10 10-50 10-80Z" fill="url(#gTrash)"/><ellipse cx="38" cy="12" rx="37" ry="8" fill="#5a5a5a"/><path d="M6 12L14 2l10 4 8-3 6 6 10-8 8 7 8-2 6 7-12 10-10-2-6 4-12-5-10 2Z" fill="#d6d6d6"/><path d="M22 13l14-3 2 12-14-2Z" fill="#3a3a3a"/><path d="M26 9l8-2 2 4-10 1Z" fill="#5bc4dc"/><path d="M42 14l10-7 6 8-12 8Z" fill="#b5603a"/><path d="M40 16l3 10-4 1Z" fill="#d44"/></svg></div>
</footer>
</body>
</html>
```

FILE: styles.css
```css
* { box-sizing: border-box; }
html, body { margin: 0; padding: 0; }
body {
  width: 3584px;
  height: 2240px;
  overflow: hidden;
  position: relative;
  background: #0b0d0a;
  font-family: Inter, "Liberation Sans", sans-serif;
  color: #0c0a09;
}
h1, h2, h3, p { margin: 0; }
button { font-family: inherit; cursor: pointer; }
.defs { position: absolute; }

/* wallpaper and the windows stacked behind Chrome */
.backdrop {
  position: absolute;
  inset: 0;
  background:
    radial-gradient(ellipse 240px 30px at 3060px 2240px, rgba(170,125,80,.75), transparent 100%),
    radial-gradient(ellipse 500px 14px at 1600px 2240px, rgba(110,100,70,.4), transparent 100%),
    linear-gradient(#0a0b0a, #11140e);
}
.foliage { position: absolute; left: 0; top: 2070px; width: 100px; height: 170px; }
.back-black {
  position: absolute;
  left: 16px;
  top: 60px;
  width: 3568px;
  height: 2034px;
  background: #020202;
  border-radius: 24px;
}
.ghost-strip {
  position: absolute;
  left: 16px;
  top: 2072px;
  width: 1000px;
  height: 10px;
  overflow: hidden;
}
.ghost {
  position: absolute;
  top: 0;
  font-size: 30px;
  line-height: 10px;
  color: #303030;
}
.ghost-a { left: 290px; }
.ghost-b { left: 754px; color: #252525; }
.back-shell {
  position: absolute;
  left: 18px;
  top: 60px;
  width: 3550px;
  height: 2012px;
  background: linear-gradient(to right, #3e3e3e, #4a4a4a 97%, #8a8a8a 99%, #b0b0b0);
  border-radius: 20px;
  box-shadow: 2px 0 0 #000;
}

/* menu bar */
.menubar {
  position: relative;
  height: 48px;
  margin-bottom: 2px;
  display: flex;
  align-items: center;
  background: linear-gradient(to right, #4a4b43, #46483a 60%, #4a4c3e);
  color: #fff;
  font-size: 26px;
  font-weight: 500;
  letter-spacing: -.4px;
  box-shadow: 0 2px 0 #0b0b08;
}
.apple { width: 28px; height: 32px; margin-left: 40px; margin-top: -4px; }
.menu { display: flex; gap: 41px; margin-left: 40px; }
.menu-app { font-weight: 700; margin-right: 2px; }
.status { margin-left: auto; display: flex; align-items: center; padding-right: 38px; }
.st { display: block; }
.st-cc { width: 40px; height: 32px; margin-right: 38px; }
.st-batt { width: 50px; height: 28px; margin-right: 38px; }
.st-wifi { width: 35px; height: 28px; margin-right: 40px; }
.st-user { width: 28px; height: 28px; margin-right: 41px; }
.st-tm { width: 32px; height: 28px; margin-right: 40px; }
.st-search { width: 26px; height: 28px; margin-right: 41px; }
.st-cc2 { width: 26px; height: 28px; margin-right: 36px; }
.st-siri { width: 28px; height: 36px; margin-right: 33px; }
.clock { font-weight: 500; white-space: nowrap; letter-spacing: .25px; }

/* browser window */
.window {
  position: relative;
  width: 3560px;
  height: 2016px;
  border-radius: 20px;
  overflow: hidden;
  background: #fff;
  display: flex;
  flex-direction: column;
  box-shadow: 0 1.500px 0 #000;
}
.tabstrip {
  height: 80px;
  flex: none;
  display: flex;
  align-items: flex-start;
  padding-left: 42px;
  background: #e3dcd9;
}
.lights { display: flex; gap: 16px; margin-top: 29px; }
.light { display: block; width: 24px; height: 24px; border-radius: 50%; }
.light-r { background: #f2655c; }
.light-y { background: #f5bb4d; }
.light-g { background: #61c655; }
.fav-replit { width: 20px; height: 24px; margin: 28px 0 0 61px; }
.tab-active {
  position: relative;
  width: 69px;
  height: 68px;
  margin: 12px 0 0 37px;
  background: #fff;
  border-radius: 22px 22px 0 0;
  display: flex;
  align-items: center;
  justify-content: center;
  flex: none;
}
.tab-active::before,
.tab-active::after {
  content: "";
  position: absolute;
  bottom: 0;
  width: 20px;
  height: 20px;
  background: radial-gradient(circle at 0 0, #e3dcd9 19.500px, #fff 20px);
}
.tab-active::before { left: -20px; }
.tab-active::after {
  right: -20px;
  background: radial-gradient(circle at 100% 0, #e3dcd9 19.500px, #fff 20px);
}
.tab-x { width: 18px; height: 18px; margin-top: -12px; }
.tabs { display: flex; margin: 24px 0 0 6px; flex: none; }
.tab {
  width: 78px;
  height: 32px;
  padding-right: 2px;
  border-right: 2px solid #fff;
  display: flex;
  justify-content: center;
  flex: none;
}
.tab-wide { width: 79.900px; }
.fav { width: 32px; height: 32px; display: block; }
.fav-me { font-family: "Liberation Serif", serif; font-size: 26px; fill: #fff; }
.tab-plus { width: 22px; height: 22px; margin: 30px 0 0 24px; flex: none; }
.tab-chevron {
  width: 56px;
  height: 56px;
  margin: 12px 0 0 124px;
  border-radius: 22px;
  background: #fff;
  display: flex;
  align-items: center;
  justify-content: center;
  flex: none;
}
.tab-chevron svg { width: 18px; height: 11px; }

.toolbar {
  height: 94px;
  flex: none;
  display: flex;
  align-items: center;
  gap: 36px;
  padding: 0 26px 2px;
  background: #fff;
  border-bottom: 2px solid #cdcdcd;
}
.tool { width: 36px; height: 36px; flex: none; display: block; }
.omnibox {
  margin-left: -2px;
  width: 2755px;
  height: 68px;
  flex: none;
  border-radius: 34px;
  background: #e0e0e0;
  display: flex;
  align-items: center;
  padding: 0 30px 0 9px;
}
.chip {
  width: 48px;
  height: 48px;
  border-radius: 50%;
  background: #fff;
  display: flex;
  align-items: center;
  justify-content: center;
}
.chip svg { width: 28px; height: 28px; }
.url { margin: 2px 0 0 17px; font-size: 28px; letter-spacing: .16px; color: #1f1f1f; white-space: nowrap; }
.star { width: 32px; height: 32px; margin-left: auto; }
.tools { display: flex; align-items: center; gap: 35px; margin-left: -1px; }
.tool-div { width: 2px; height: 32px; background: #dcdcdc; }
.avatar { width: 40px; height: 40px; flex: none; }

/* app */
.app { position: relative; flex: 1; min-height: 0; display: flex; overflow: hidden; }
.edge-fade {
  position: absolute;
  inset: 0;
  pointer-events: none;
  box-shadow: inset -30px -30px 40px -26px rgba(0,0,0,.11);
}
.sidebar {
  width: 576px;
  flex: none;
  display: flex;
  flex-direction: column;
  padding: 32px;
  border-right: 2px solid #e7e5e4;
}
.brand { margin-top: 2px; font-size: 48px; line-height: 64px; font-weight: 700; letter-spacing: -1px; }
.nav { margin-top: 62px; display: flex; flex-direction: column; gap: 16px; }
.nav-item { height: 80px; line-height: 80px; padding-left: 32px; font-size: 28px; font-weight: 500; letter-spacing: -.25px; }
.side-foot { margin-top: auto; padding-top: 32px; border-top: 2px solid #e7e5e4; }
.user-name { font-size: 32px; line-height: 48px; font-weight: 500; letter-spacing: -.75px; }
.user-role { font-size: 28px; line-height: 40px; color: #78716c; letter-spacing: -.5px; }
.btn-logout {
  display: block;
  width: 100%;
  height: 80px;
  margin-top: 32px;
  border: 0;
  border-radius: 12px;
  background: #dd5350;
  color: #fff;
  font-size: 28px;
  font-weight: 500;
  letter-spacing: -.3px;
}
.main { flex: 1; min-width: 0; padding: 32px 32px 0; overflow: hidden; }
.welcome { font-size: 60px; line-height: 72px; font-weight: 700; letter-spacing: -1.900px; margin-bottom: 50px; }
.sec-title {
  display: flex;
  align-items: center;
  gap: 16px;
  font-size: 48px;
  line-height: 64px;
  font-weight: 600;
  letter-spacing: -1.400px;
  margin-bottom: 30px;
}
.sec-first { letter-spacing: -1.750px; }
.sec-next { margin-top: 66px; margin-bottom: 32px; }
.sec-icon {
  width: 48px;
  height: 48px;
  flex: none;
  fill: none;
  stroke: #0c0a09;
  stroke-width: 2;
  stroke-linecap: round;
  stroke-linejoin: round;
}
.cards { display: grid; grid-template-columns: repeat(3, 1fr); gap: 64px; }
.card {
  border: 2px solid #e7e5e4;
  border-radius: 16px;
  background: #fff;
  overflow: hidden;
  box-shadow: 0 2px 4px rgba(0,0,0,.06);
}
.card-img {
  height: 520px;
  background: #f5f5f4;
  font-size: 32px;
  line-height: 50px;
  letter-spacing: -.7px;
  color: #0c0a09;
}
.broken { width: 32px; height: 32px; vertical-align: -2px; margin-right: 1px; }
.card-body { padding: 50px 48px 48px; }
.card-head { display: flex; justify-content: space-between; align-items: baseline; }
.card-title { font-size: 40px; line-height: 40px; font-weight: 600; letter-spacing: -2.400px; }
.price { font-size: 48px; line-height: 48px; font-weight: 700; letter-spacing: -2.200px; color: #14325f; }
.desc {
  margin-top: 56px;
  height: 96px;
  font-size: 32px;
  line-height: 48px;
  letter-spacing: -.67px;
  color: #78716c;
}
.tags { display: flex; gap: 16px; margin-top: 32px; align-items: flex-start; }
.tag {
  height: 48px;
  line-height: 48px;
  padding: 0 16px;
  border-radius: 24px;
  background: #fafaf9;
  font-size: 24px;
  letter-spacing: -.1px;
}
.more { font-size: 24px; line-height: 34px; color: #78716c; letter-spacing: -.05px; }
.card-foot { display: flex; justify-content: space-between; align-items: center; margin-top: 46px; }
.cap { font-size: 28px; color: #78716c; letter-spacing: -.36px; }
.btn-book {
  height: 80px;
  padding: 0 32px;
  border: 0;
  border-radius: 12px;
  background: #14325f;
  color: #fff;
  font-size: 28px;
  font-weight: 500;
  letter-spacing: -.5px;
}
.promo-grid { display: grid; grid-template-columns: repeat(2, 1fr); gap: 48px; }
.promo {
  border: 2px solid #e7e5e4;
  border-radius: 16px;
  padding: 48px;
  box-shadow: 0 2px 4px rgba(0,0,0,.06);
}
.promo-title { font-size: 32px; line-height: 48px; font-weight: 600; letter-spacing: -.5px; }
.promo-text { margin-top: 16px; font-size: 32px; line-height: 48px; color: #78716c; letter-spacing: -.75px; }
.btn-outline {
  display: block;
  margin-top: 32px;
  height: 80px;
  padding: 0 32px;
  border: 2px solid #e7e5e4;
  border-radius: 12px;
  background: #fff;
  color: #0c0a09;
  font-size: 28px;
  font-weight: 500;
  letter-spacing: -.3px;
}

/* dock */
.dock {
  position: absolute;
  left: 100px;
  top: 2092px;
  width: 3384px;
  height: 138px;
  display: flex;
  gap: 29.850px;
  padding: 18px 0 0 16px;
  border: 2px solid rgba(170,180,165,.3);
  border-radius: 46px;
  background: linear-gradient(to right, #232b24 0%, #262d25 32%, #2f2a20 40%, #2a2c24 50%, #2e312c 70%, #313430 88%, #4f3d2a 91%, #3a3226 95%, #252522 98%);
}
.dock-item { position: relative; width: 87px; height: 87px; flex: none; }
.di { width: 87px; height: 87px; display: block; overflow: visible; }
.is-open::after {
  content: "";
  position: absolute;
  left: 40px;
  top: 107px;
  width: 7px;
  height: 7px;
  border-radius: 50%;
  background: #a9b0a8;
}
.dock-sep { width: 2px; height: 102px; background: #7c7c76; flex: none; margin-top: -2px; }
.dock-sep-a { margin-left: 11px; margin-right: 10px; }
.dock-sep-b { margin-left: 11px; margin-right: 1px; }
.thumb { position: relative; width: 102px; height: 87px; flex: none; margin-right: -14px; padding-top: 15px; }
.thumb-img { width: 102px; height: 58px; display: block; }
.thumb-badge { position: absolute; left: 67px; top: 60px; width: 32px; height: 32px; }
.trash { width: 76px; height: 100px; flex: none; margin-left: 9px; margin-top: -7px; }
.trash svg { width: 76px; height: 100px; display: block; }
.cal-mon { font-size: 19px; font-weight: 600; fill: #fff; text-anchor: middle; }
.cal-day { font-size: 50px; font-weight: 300; fill: #222; text-anchor: middle; }
.badge { font-size: 24px; font-weight: 500; fill: #fff; text-anchor: middle; }
.tv { font-size: 42px; font-weight: 500; fill: #fff; }
.term-t { font-family: "DejaVu Sans Mono", monospace; font-size: 30px; fill: #6fd24a; }
.word { font-size: 24px; font-weight: 500; fill: #fff; text-anchor: middle; }
```
